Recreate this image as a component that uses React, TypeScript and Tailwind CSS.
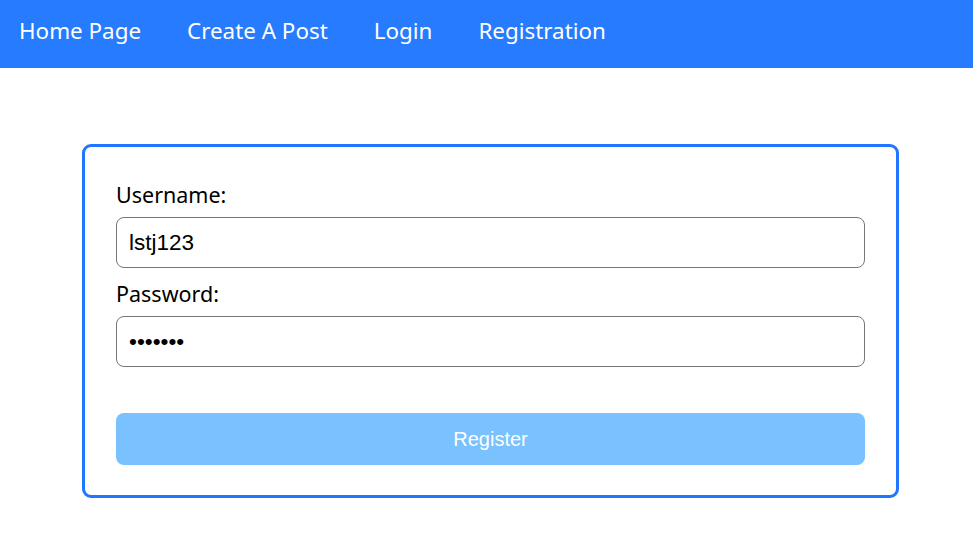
export default function App() {
  return (
    <div className="min-h-screen bg-white" style={{ fontFamily: '"Noto Sans", "Open Sans", sans-serif' }}>
      <nav className="h-[68px] bg-[#267bff] flex items-center pl-[19px] pb-[6px] gap-[46px] text-white text-[22.4px]">
        <a>Home Page</a>
        <a>Create A Post</a>
        <a>Login</a>
        <a>Registration</a>
      </nav>

      <div className="pt-[76px] pl-[82px]">
        <form className="w-[817px] border-[3px] border-[#2176ff] rounded-[9px] px-[31px] pt-[34px] pb-[30px]">
          <label className="block text-[21.5px] text-black leading-[28px] mb-[8px]">Username:</label>
          <input
            className="block w-full h-[51px] border border-[#767676] rounded-[8px] px-[12px] text-[22.5px] text-black"
            style={{ fontFamily: '"Liberation Sans", Arial, sans-serif' }}
            defaultValue="lstj123"
          />
          <label className="block text-[21.5px] text-black leading-[28px] mt-[12px] mb-[8px]">Password:</label>
          <input
            type="password"
            className="block w-full h-[51px] border border-[#767676] rounded-[8px] px-[12px] text-[22.5px] text-black"
            style={{ fontFamily: '"Liberation Sans", Arial, sans-serif' }}
            defaultValue="1234567"
          />
          <button
            type="button"
            className="mt-[46px] w-full h-[52px] rounded-[8px] bg-[#79c1ff] text-white text-[20px]"
            style={{ fontFamily: '"Liberation Sans", Arial, sans-serif' }}
          >
            Register
          </button>
        </form>
      </div>
    </div>
  )
}
